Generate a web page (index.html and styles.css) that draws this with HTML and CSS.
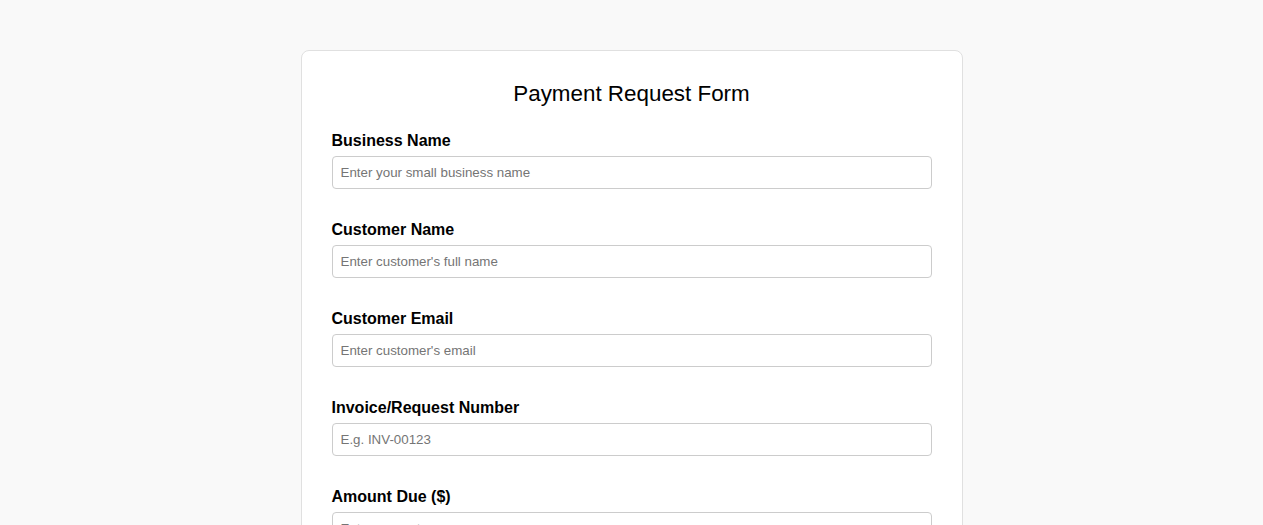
FILE: index.html
```html
<!DOCTYPE html>
<html lang="en">
<head>
<meta charset="utf-8">
<title>Payment Request Form</title>
<link rel="stylesheet" href="styles.css">
</head>
<body>
<div class="card">
  <h1 class="title">Payment Request Form</h1>
  <form class="form">
    <div class="field">
      <label class="label" for="business">Business Name</label>
      <input class="input" id="business" type="text" placeholder="Enter your small business name">
    </div>
    <div class="field">
      <label class="label" for="customer">Customer Name</label>
      <input class="input" id="customer" type="text" placeholder="Enter customer's full name">
    </div>
    <div class="field">
      <label class="label" for="email">Customer Email</label>
      <input class="input" id="email" type="email" placeholder="Enter customer's email">
    </div>
    <div class="field">
      <label class="label" for="invoice">Invoice/Request Number</label>
      <input class="input" id="invoice" type="text" placeholder="E.g. INV-00123">
    </div>
    <div class="field">
      <label class="label" for="amount">Amount Due ($)</label>
      <input class="input" id="amount" type="text" placeholder="Enter amount">
    </div>
    <div class="field">
      <label class="label" for="due">Due Date</label>
      <input class="input" id="due" type="text" placeholder="MM/DD/YYYY">
    </div>
  </form>
</div>
</body>
</html>
```

FILE: styles.css
```css
html, body {
  margin: 0;
  padding: 0;
}

body {
  background: #f9f9f9;
  font-family: "Liberation Sans", Arial, sans-serif;
  color: #000;
}

.card {
  max-width: 600px;
  margin: 50px auto;
  padding: 30px;
  background: #fff;
  border: 1px solid #e0e0e0;
  border-radius: 8px;
}

.title {
  margin: 0 0 25px;
  font-size: 22.4px;
  line-height: 26px;
  font-weight: normal;
  text-align: center;
}

.form {
  margin: 0;
}

.field {
  margin-bottom: 32px;
}

.label {
  display: block;
  margin-bottom: 6px;
  font-size: 16px;
  line-height: 18px;
  font-weight: bold;
}

.input {
  display: block;
  box-sizing: border-box;
  width: 100%;
  height: 33px;
  margin: 0;
  padding: 0 8px;
  border: 1px solid #ccc;
  border-radius: 4px;
  background: #fff;
  font-family: "Liberation Sans", Arial, sans-serif;
  font-size: 13.333px;
  color: #000;
}

.input::placeholder {
  color: #757575;
}
```
